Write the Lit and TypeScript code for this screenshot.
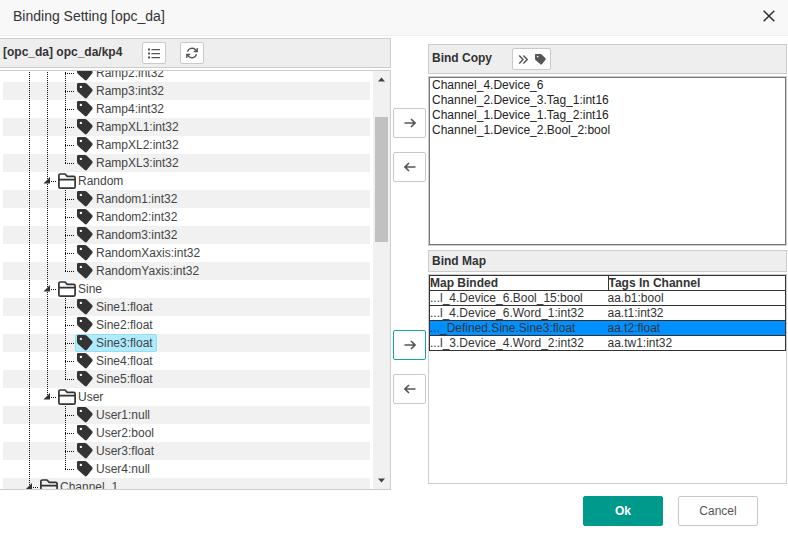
import { LitElement, html, css, svg, nothing } from "lit";
import { customElement, property, state } from "lit/decorators.js";
import { classMap } from "lit/directives/class-map.js";

type Guide = "line" | "tee" | "end" | "arrow" | "arrow-end" | "blank";

interface TreeRow {
  label: string;
  folder?: boolean;
  guides: Guide[];
}

const leaves = (labels: string[], lineage: Guide[]): TreeRow[] =>
  labels.map((label, i) => ({
    label,
    guides: [...lineage, i === labels.length - 1 ? "end" : "tee"],
  }));

const ROWS: TreeRow[] = [
  ...leaves(
    ["Ramp2:int32", "Ramp3:int32", "Ramp4:int32", "RampXL1:int32", "RampXL2:int32", "RampXL3:int32"],
    ["line", "line"]
  ),
  { label: "Random", folder: true, guides: ["line", "arrow"] },
  ...leaves(
    ["Random1:int32", "Random2:int32", "Random3:int32", "RandomXaxis:int32", "RandomYaxis:int32"],
    ["line", "line"]
  ),
  { label: "Sine", folder: true, guides: ["line", "arrow"] },
  ...leaves(["Sine1:float", "Sine2:float", "Sine3:float", "Sine4:float", "Sine5:float"], ["line", "line"]),
  { label: "User", folder: true, guides: ["line", "arrow-end"] },
  ...leaves(["User1:null", "User2:bool", "User3:float", "User4:null"], ["line", "blank"]),
  { label: "Channel_1", folder: true, guides: ["arrow"] },
];

const COPIED = [
  "Channel_4.Device_6",
  "Channel_2.Device_3.Tag_1:int16",
  "Channel_1.Device_1.Tag_2:int16",
  "Channel_1.Device_2.Bool_2:bool",
];

const BOUND = [
  ["...l_4.Device_6.Bool_15:bool", "aa.b1:bool"],
  ["...l_4.Device_6.Word_1:int32", "aa.t1:int32"],
  ["..._Defined.Sine.Sine3:float", "aa.t2:float"],
  ["...l_3.Device_4.Word_2:int32", "aa.tw1:int32"],
];

const tagIcon = (size: number) => html`
  <svg width=${size} height=${size} viewBox="0 0 16 16" aria-hidden="true">
    <path
      fill="currentColor"
      fill-rule="evenodd"
      d="M1.2 0H8Q9 0 9.8.8L15.3 6.2Q16 7.2 15.3 8.2L10 14.8Q9 16 7.8 15L1 9Q0 8 0 7V1.2Q0 0 1.2 0ZM3.9 2.7A1.2 1.2 0 1 0 3.9 5.1A1.2 1.2 0 1 0 3.9 2.7Z"
    />
  </svg>
`;

const folderIcon = html`
  <svg width="18" height="18" viewBox="0 0 18 18" fill="none" stroke="currentColor" stroke-width="1.7" aria-hidden="true">
    <path d="M.9 3.6Q.9 2 2.6 2H7L9.2 4.4H15.6Q17.1 4.4 17.1 5.8V14.8Q17.1 16.2 15.6 16.2H2.4Q.9 16.2 .9 14.8ZM.9 7.6H17.1" />
  </svg>
`;

const arrowIcon = (back: boolean) => html`
  <svg width="12" height="10" viewBox="0 0 12 10" fill="none" stroke="currentColor" stroke-width="1.6" aria-hidden="true">
    ${back ? svg`<path d="M11.5 5H1M5 1L1 5L5 9" />` : svg`<path d="M.5 5H11M7 1L11 5L7 9" />`}
  </svg>
`;

const guideCell = (kind: Guide) => {
  const arrow = kind === "arrow" || kind === "arrow-end";
  const short = kind === "end" || kind === "arrow-end";
  const branch = kind === "tee" || kind === "end" || arrow;
  return html`
    <svg class="guide" width="18" height="18" viewBox="0 0 18 18" shape-rendering="crispEdges" aria-hidden="true">
      ${kind === "blank"
        ? nothing
        : svg`<path d=${`M8.5 0V${short ? 10 : 18}`} stroke="#111" stroke-dasharray="1 1" />`}
      ${branch ? svg`<path d=${`M${arrow ? 12 : 8} 9.5H17`} stroke="#111" stroke-dasharray="1 1" />` : nothing}
      ${arrow ? svg`<path d="M11 5V11.5H4.5Z" fill="#333" shape-rendering="geometricPrecision" />` : nothing}
    </svg>
  `;
};

@customElement("tag-tree")
export class TagTree extends LitElement {
  @state() private selected = "Sine3:float";

  static styles = css`
    :host {
      display: flex;
      flex: 1 1 0;
      min-height: 0;
      border: 1px solid #ccc;
      border-left: 0;
      box-sizing: border-box;
    }
    .viewport {
      flex: 1;
      min-width: 0;
      overflow: hidden;
      padding: 0 3px;
    }
    .list {
      margin: -7px 0 0;
      padding: 0;
      list-style: none;
    }
    .row {
      display: flex;
      height: 18px;
      padding-left: 18px;
      line-height: 18px;
      white-space: nowrap;
    }
    .row:nth-child(even) {
      background: #f1f1f1;
    }
    .guide {
      flex: none;
    }
    .node {
      display: flex;
      align-items: center;
      gap: 3px;
      box-sizing: border-box;
      height: 18px;
      padding: 0 3px 0 1px;
      border: 1px solid transparent;
      border-radius: 2px;
      color: #333;
      cursor: pointer;
    }
    .folder {
      gap: 2px;
      padding-left: 0;
    }
    .selected {
      background: #aeebff;
      border-color: #9bdcf0;
    }
    .title {
      color: #444;
    }
    .scrollbar {
      display: flex;
      flex-direction: column;
      flex: none;
      width: 17px;
      background: #f1f1f1;
    }
    .step {
      display: flex;
      align-items: center;
      justify-content: center;
      height: 17px;
      color: #444;
    }
    .before {
      flex: 29;
    }
    .thumb {
      flex: 125;
      margin: 0 2px;
      background: #c1c1c1;
    }
    .after {
      flex: 230;
    }
  `;

  render() {
    return html`
      <div class="viewport">
        <ul class="list" role="tree" aria-label="Tags">
          ${ROWS.map(
            (row) => html`
              <li class="row" role="treeitem" aria-selected=${row.label === this.selected}>
                ${row.guides.map(guideCell)}
                <span
                  class=${classMap({ node: true, folder: !!row.folder, selected: row.label === this.selected })}
                  @click=${() => (this.selected = row.label)}
                >
                  ${row.folder ? folderIcon : tagIcon(16)}
                  <span class="title">${row.label}</span>
                </span>
              </li>
            `
          )}
        </ul>
      </div>
      <div class="scrollbar" aria-hidden="true">
        <div class="step"><svg width="7" height="5"><path d="M0 4.5L3.5 .5L7 4.5Z" fill="currentColor" /></svg></div>
        <div class="before"></div>
        <div class="thumb"></div>
        <div class="after"></div>
        <div class="step"><svg width="7" height="5"><path d="M0 .5L3.5 4.5L7 .5Z" fill="currentColor" /></svg></div>
      </div>
    `;
  }
}

@customElement("move-button")
export class MoveButton extends LitElement {
  @property({ type: Boolean }) back = false;
  @property({ type: Boolean }) active = false;
  @property() label = "";

  static styles = css`
    :host {
      display: block;
    }
    .button {
      display: flex;
      align-items: center;
      justify-content: center;
      width: 33px;
      height: 30px;
      padding: 0;
      background: #fff;
      border: 1px solid #c9c9c9;
      border-radius: 2px;
      color: #555;
      cursor: pointer;
    }
    .active {
      border-color: #16a79c;
    }
  `;

  render() {
    return html`
      <button type="button" class=${classMap({ button: true, active: this.active })} aria-label=${this.label}>
        ${arrowIcon(this.back)}
      </button>
    `;
  }
}

@customElement("app-root")
export class AppRoot extends LitElement {
  @state() private current = 2;

  static styles = css`
    :host {
      display: flex;
      flex-direction: column;
      box-sizing: border-box;
      height: 100vh;
      min-height: 400px;
      background: #fff;
      color: #333;
      font-family: "Liberation Sans", Arial, sans-serif;
      font-size: 12px;
    }
    .titlebar {
      display: flex;
      align-items: center;
      justify-content: space-between;
      box-sizing: border-box;
      height: 36px;
      padding: 0 13px 4px;
      background: #f8f8f8;
      border-bottom: 1px solid #eee;
    }
    .heading {
      margin: 0;
      font-size: 14px;
      font-weight: 400;
      line-height: 16px;
    }
    .close {
      display: flex;
      padding: 0;
      border: 0;
      background: none;
      color: #2e2d3c;
      cursor: pointer;
    }
    .main {
      display: grid;
      grid-template-columns: minmax(0, 391fr) 37px minmax(0, 359fr);
      grid-template-rows: minmax(0, 1fr);
      flex: 1;
      min-height: 0;
      padding: 2px 1px 0 0;
    }
    .column {
      display: flex;
      flex-direction: column;
      min-width: 0;
      gap: 2px;
    }
    .right {
      padding: 6px 0;
    }
    .bar {
      display: flex;
      align-items: center;
      box-sizing: border-box;
      height: 30px;
      padding-left: 3px;
      background: #eee;
      border: 1px solid #ccc;
      font-weight: 700;
      white-space: nowrap;
    }
    .source {
      border-left: 0;
    }
    .slim {
      height: 22px;
      margin-top: 2px;
    }
    .label {
      margin: 0 20px 0 0;
      padding-bottom: 2px;
      font-size: 12px;
      line-height: 14px;
    }
    .slim .label {
      padding-bottom: 0;
    }
    .tool {
      display: flex;
      align-items: center;
      justify-content: center;
      gap: 7px;
      width: 24px;
      height: 22px;
      margin-right: 14px;
      padding: 0;
      background: #fff;
      border: 1px solid #c9c9c9;
      border-radius: 2px;
      color: #555;
      cursor: pointer;
    }
    .wide {
      width: 39px;
    }
    .moves {
      display: flex;
      flex-direction: column;
      align-items: center;
      gap: 14px;
      padding: 70px 0 0;
    }
    .moves-map {
      margin-top: 134px;
    }
    .copybox {
      display: flex;
      flex: 170 1 0;
      min-height: 0;
      box-sizing: border-box;
      border: 1px solid #ccc;
    }
    .copylist {
      flex: 1;
      min-width: 0;
      margin: 0;
      padding: 0;
      background: #fff;
      border: 1px solid #767676;
      border-radius: 0;
      color: #222;
      font: inherit;
      outline: 0;
      overflow: hidden;
    }
    .choice {
      box-sizing: border-box;
      height: 15px;
      min-height: 15px;
      padding: 0 2px;
      line-height: 15px;
    }
    .mapbox {
      flex: 210 1 0;
      min-height: 0;
      box-sizing: border-box;
      border: 1px solid #ccc;
      overflow: hidden;
    }
    .map {
      width: 100%;
      table-layout: fixed;
      border-collapse: separate;
      border-spacing: 0;
      border: 1px solid #333;
      border-bottom: 0;
      line-height: 14px;
    }
    .cell {
      height: 14px;
      padding: 0;
      border-bottom: 1px solid #333;
      text-align: left;
      white-space: nowrap;
      overflow: hidden;
    }
    .head + .head {
      border-left: 1px solid #333;
    }
    .picked {
      background: #0090ff;
    }
    .footer {
      display: flex;
      justify-content: flex-end;
      gap: 15px;
      padding: 6px 30px 7px 0;
    }
    .action {
      width: 80px;
      height: 30px;
      padding: 0;
      background: #fff;
      border: 1px solid #c9c9c9;
      border-radius: 2px;
      color: #555;
      font: inherit;
      cursor: pointer;
    }
    .primary {
      background: #009a8c;
      border-color: #009a8c;
      color: #fff;
      font-weight: 700;
    }
  `;

  render() {
    return html`
      <header class="titlebar">
        <h1 class="heading">Binding Setting [opc_da]</h1>
        <button type="button" class="close" aria-label="Close">
          <svg width="12" height="12" viewBox="0 0 12 12" stroke="currentColor" stroke-width="1.5">
            <path d="M.7 .7L11.3 11.3M11.3 .7L.7 11.3" />
          </svg>
        </button>
      </header>

      <main class="main">
        <section class="column">
          <div class="bar source">
            <h2 class="label">[opc_da] opc_da/kp4</h2>
            <button type="button" class="tool" aria-label="List">
              <svg width="12" height="11" viewBox="0 0 12 11" fill="currentColor">
                <path d="M0 .5H2V2.5H0ZM3.5 1H12V2.3H3.5ZM0 4.5H2V6.5H0ZM3.5 5H12V6.3H3.5ZM0 8.5H2V10.5H0ZM3.5 9H12V10.3H3.5Z" />
              </svg>
            </button>
            <button type="button" class="tool" aria-label="Refresh">
              <svg width="12" height="12" viewBox="0 0 24 24" fill="none" stroke="currentColor" stroke-width="2.6">
                <path d="M22.5 2V9H15.5M1.5 22V15H8.5M3 9.5A9.5 9.5 0 0 1 18.5 5L22.5 9M1.5 15L5.5 19A9.5 9.5 0 0 0 21 14.5" />
              </svg>
            </button>
          </div>
          <tag-tree></tag-tree>
        </section>

        <div class="moves">
          <move-button label="Copy tag"></move-button>
          <move-button back label="Remove copied tag"></move-button>
          <move-button class="moves-map" active label="Bind tag"></move-button>
          <move-button back label="Unbind tag"></move-button>
        </div>

        <section class="column right">
          <div class="bar">
            <label class="label" for="copies">Bind Copy</label>
            <button type="button" class="tool wide" aria-label="Copy as tags">
              <svg width="10" height="9" viewBox="0 0 10 9" fill="none" stroke="currentColor" stroke-width="1.4">
                <path d="M1.2 .6L5 4.5L1.2 8.4M5.4 .6L9.2 4.5L5.4 8.4" />
              </svg>
              ${tagIcon(11)}
            </button>
          </div>
          <div class="copybox">
            <select class="copylist" id="copies" size="10" multiple>
              ${COPIED.map((name) => html`<option class="choice">${name}</option>`)}
            </select>
          </div>
          <div class="bar slim"><h2 class="label">Bind Map</h2></div>
          <div class="mapbox">
            <table class="map">
              <thead>
                <tr>
                  <th class="cell head" scope="col">Map Binded</th>
                  <th class="cell head" scope="col">Tags In Channel</th>
                </tr>
              </thead>
              <tbody>
                ${BOUND.map(
                  ([source, target], i) => html`
                    <tr class=${classMap({ picked: i === this.current })} @click=${() => (this.current = i)}>
                      <td class="cell">${source}</td>
                      <td class="cell">${target}</td>
                    </tr>
                  `
                )}
              </tbody>
            </table>
          </div>
        </section>
      </main>

      <footer class="footer">
        <button type="button" class="action primary">Ok</button>
        <button type="button" class="action">Cancel</button>
      </footer>
    `;
  }
}
